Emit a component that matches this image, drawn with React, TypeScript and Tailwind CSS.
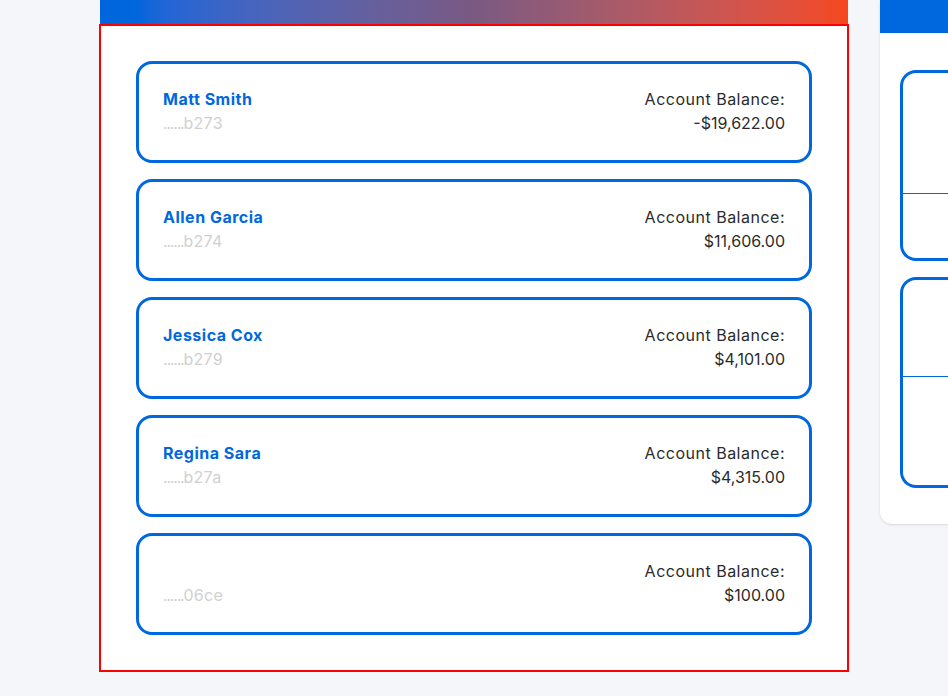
import React from "react";

const accounts = [
	{ name: "Matt Smith", id: "b273", balance: "-$19,622.00" },
	{ name: "Allen Garcia", id: "b274", balance: "$11,606.00" },
	{ name: "Jessica Cox", id: "b279", balance: "$4,101.00" },
	{ name: "Regina Sara", id: "b27a", balance: "$4,315.00" },
	{ name: "", id: "06ce", balance: "$100.00" },
];

function AccountCard({ name, id, balance }: { name: string; id: string; balance: string }) {
	return (
		<div className="flex items-end justify-between h-[102px] px-6 pt-[23px] pb-[25px] border-[3px] border-[#0068de] rounded-[16px] bg-white">
			<div className="flex flex-col">
				{name && (
					<h5 className="text-[16px] leading-6 font-bold tracking-[0.5px] text-[#0068de]">{name}</h5>
				)}
				<p className="text-[16px] leading-6 text-[#d0d0d0]">
					<span className="tracking-[-1.2px]">......</span>
					<span className="tracking-[0.3px]">{id}</span>
				</p>
			</div>
			<div className="flex flex-col items-end text-[16px] leading-6 text-[#2b2b2b]">
				<p className="tracking-[0.5px]">Account Balance:</p>
				<p>{balance}</p>
			</div>
		</div>
	);
}

export default function App() {
	return (
		<div
			className="min-h-screen bg-[#f5f6fa] flex items-start gap-8 pl-[100px] overflow-hidden"
			style={{ fontFamily: "Inter, 'Open Sans', sans-serif" }}
		>
			<div className="w-[748px] shrink-0 flex flex-col">
				<div className="h-6 bg-linear-to-r from-[#0066dd] from-5% via-[#7a5982] to-[#f5481c]" />
				<div className="-mx-px border-2 border-[#ff0000] bg-white p-[35px] flex flex-col gap-4">
					{accounts.map((a) => (
						<AccountCard key={a.id} {...a} />
					))}
				</div>
			</div>

			<div className="w-[200px] shrink-0 bg-white rounded-b-xl shadow-sm flex flex-col">
				<div className="h-[33px] bg-[#0068de]" />
				<div className="flex flex-col gap-4 pt-[37px] pb-9 pl-5">
					<div className="h-[191px] border-[3px] border-r-0 border-[#0068de] rounded-l-[16px] flex flex-col">
						<div className="h-[121px] border-b border-[#0068de]" />
					</div>
					<div className="h-[211px] border-[3px] border-r-0 border-[#0068de] rounded-l-[16px] flex flex-col">
						<div className="h-[97px] border-b border-[#0068de]" />
					</div>
				</div>
			</div>
		</div>
	);
}
